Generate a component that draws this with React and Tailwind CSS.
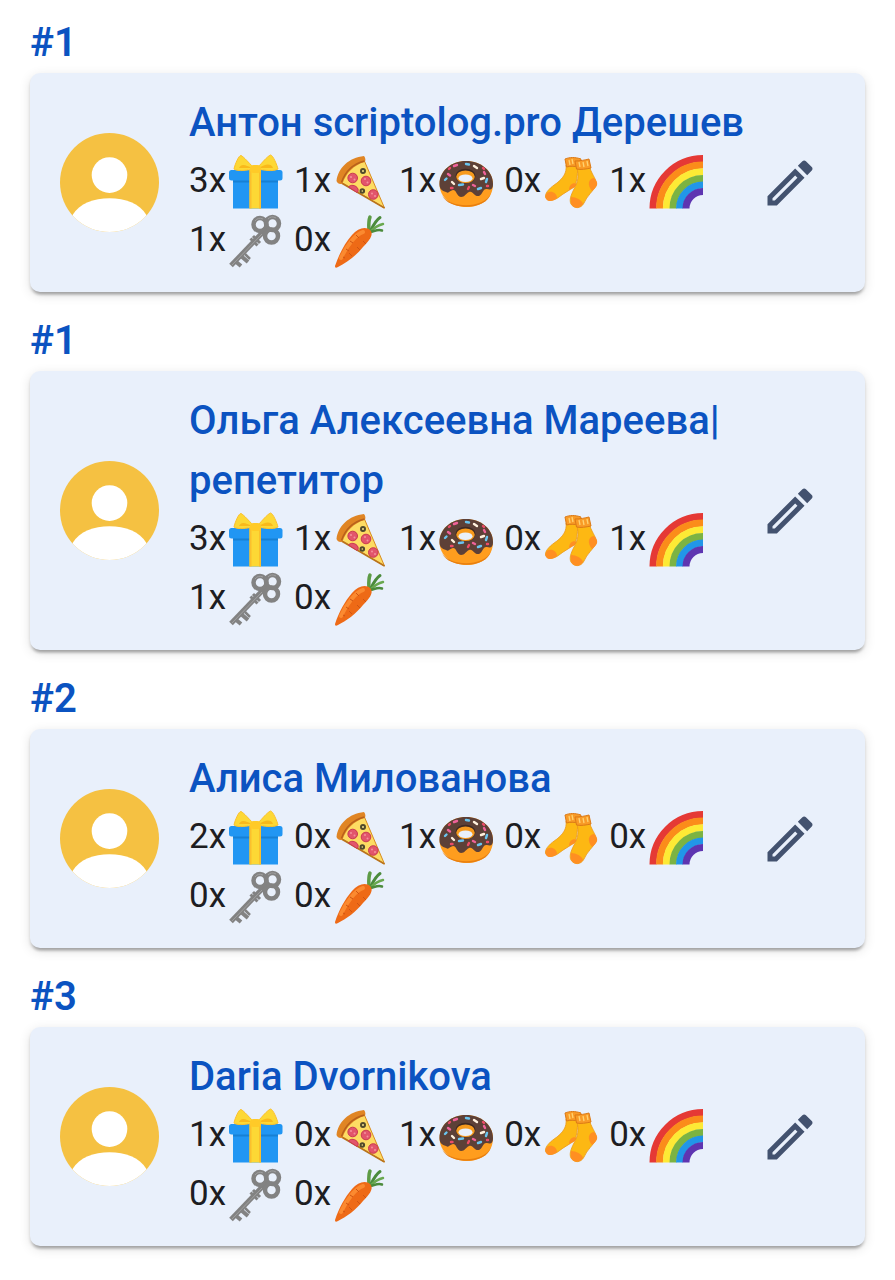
import React from "react";

const players = [
  { place: 1, name: "Антон scriptolog.pro Дерешев", counts: [3, 1, 1, 0, 1, 1, 0] },
  { place: 1, name: "Ольга Алексеевна Мареева|репетитор", counts: [3, 1, 1, 0, 1, 1, 0] },
  { place: 2, name: "Алиса Милованова", counts: [2, 0, 1, 0, 0, 0, 0] },
  { place: 3, name: "Daria Dvornikova", counts: [1, 0, 1, 0, 0, 0, 0] },
];

function Gift() {
  return (
    <>
      <path d="M6 28h45v29.5H6z" fill="#2196f3" />
      <path d="M6 29h45v2.5H6z" fill="#1780d4" />
      <rect x="2" y="19" width="53.5" height="10.5" rx="2.5" fill="#2196f3" />
      <path d="M22.5 19h11.5v38.5H22.5z" fill="#fdd835" />
      <path d="M22.5 19h2v38.5h-2zM32 19h2v38.5h-2z" fill="#fbc02d" />
      <path
        d="M26 16C22 12 17 6 14 4.500C12 4 8 13 7 18C11 21 21 19 26 18zM31 16C35 12 40 5.500 43.500 4C46 4 50 14 51 18C46 21 36 19 31 18z"
        fill="#fdd835"
        stroke="#fbc02d"
      />
      <path d="M25 17C19 14 14 12 12 17zM32 17C38 13 44 12 46 17z" fill="#f9b91b" />
      <rect x="23" y="14" width="11" height="8" rx="3.500" fill="#ffca28" />
    </>
  );
}

function Pizza() {
  return (
    <>
      <path d="M9 31C13 21 21 13 32 9L52.500 57z" fill="#fddc63" stroke="#d98c1f" strokeWidth="1" />
      <path d="M9.500 32L52.500 57" stroke="#b9731c" strokeWidth="1.500" />
      <path
        d="M32 5C33.500 7 34 9.500 32.500 11C22 14 14 22 10.500 32.500C8 33.500 5.500 32.500 4.500 30C6 17 17 6.500 32 5z"
        fill="#e08524"
      />
      <path d="M32.500 10C21 13 13 21 9.500 31.500" fill="none" stroke="#b8611b" strokeWidth="1.500" />
      <g fill="#e2556c" stroke="#c93a50">
        <circle cx="20.700" cy="27" r="4.800" />
        <circle cx="34" cy="30" r="4.800" />
        <circle cx="41.300" cy="43.500" r="4.800" />
        <path d="M16.500 36C18 33.500 24 33.500 26 38C26.500 40 26 41 25 41.500z" />
      </g>
      <g fill="#f3909c">
        <circle cx="19" cy="26" r="1" />
        <circle cx="22.500" cy="28.500" r="1" />
        <circle cx="33" cy="28" r="1" />
        <circle cx="35.500" cy="31.500" r="1" />
        <circle cx="40" cy="42.500" r="1" />
        <circle cx="43" cy="45" r="1" />
      </g>
      <g fill="#f7e28b" stroke="#514a2b" strokeWidth="2">
        <circle cx="31" cy="20" r="2" />
        <circle cx="30.300" cy="40" r="1.800" />
      </g>
    </>
  );
}

function Donut() {
  return (
    <>
      <path
        d="M2.500 33C2.500 20 14 10 29 10S56 20 56 33C56 48 44 56 29.500 56S2.500 47 2.500 33z"
        fill="#ff9d1e"
      />
      <path d="M5 44C11 57 47 59 54 42C50 60 11 60 5 44z" fill="#e87f10" />
      <path
        d="M2.500 33C2.500 20 14 10 29 10S56 20 56 33C56 39 53 39 50 38C46 37 46 43 42 45C37 46 36 39 32 41C28 43 28 46 24 46C19 45 20 39 16 39C12 40 12 43 9 41C5 40 2.500 38 2.500 33z"
        fill="#5d4037"
      />
      <ellipse cx="28.500" cy="25" rx="10" ry="7.300" fill="#3f2a24" />
      <ellipse cx="28.500" cy="25.700" rx="9.300" ry="6.300" fill="#f79a1d" />
      <ellipse cx="28.500" cy="27.300" rx="7" ry="3.800" fill="#e9f0fb" />
      <g strokeWidth="2.400" strokeLinecap="round">
        <path d="M20 14l-3 1M11 23l2 1.500M36 34l2 1M47 21l1 2" stroke="#f0629a" />
        <path d="M29 13l3 .5M8 29l1.500-1.500M22 34l4-.5M41 38l3-1M50 28l-1 3" stroke="#6ac5f0" />
        <path d="M37 15l3 2M44 28l3-1M17 33l-2-2" stroke="#fff0dd" />
        <path d="M46 17l1 1M12 18l1-1M31 38l1-2M14 37l1.500 0M50 35l1 0" stroke="#ed4c67" />
      </g>
    </>
  );
}

function Socks() {
  return (
    <>
      <path
        d="M24 14C25 22 21 27 15 32C9 36 3 41 3.500 46C5 51 12 50 17 46C22 42 28 39 32 36C35 32 35 25 36 16z"
        fill="#fdb813"
        stroke="#eb9818"
        strokeWidth=".8"
      />
      <path d="M5 42C9 39 15 42 15 47C10 51 4 51 3.500 46C3.500 44 4 43 5 42z" fill="#ff8f22" />
      <path d="M35 33C31 31 27 34 27 39L33 36z" fill="#ff8f22" />
      <path d="M23 8C28 6 33 6 39 8L37 16C32 15 28 15 24.500 16z" fill="#f99b27" stroke="#dc7a16" strokeWidth="1" />
      <path
        d="M35 17C37 25 36 31 32 38C29 44 27 49 29 53C32 58 39 58 42 52C45 45 51 40 54 35C56 30 50 24 48 17z"
        fill="#fdb813"
        stroke="#eb9818"
        strokeWidth=".8"
      />
      <path d="M29 46C34 46 40 49 41 53C38 58 30 58 29 52z" fill="#ff8f22" />
      <path d="M52 27C46 28 45 34 50 40C56 35 57 32 52 27z" fill="#ff8f22" />
      <path d="M33 10C38 10 43 9 47 8L49 17C44 18 39 19 34.500 18z" fill="#f99b27" stroke="#dc7a16" strokeWidth="1" />
      <path
        d="M27 9l1 5M30 8l1 5M37 11l1 5M41 11l1 5M45 10l1 5"
        fill="none"
        stroke="#ffd270"
        strokeWidth="1.300"
      />
    </>
  );
}

function Rainbow() {
  return (
    <g fill="none" strokeWidth="7">
      <path d="M6 57.500A50 50 0 0 1 56 7.500" stroke="#e53935" />
      <path d="M12.600 57.500A43.400 43.400 0 0 1 56 14.100" stroke="#fb8c1a" />
      <path d="M19.300 57.500A36.700 36.700 0 0 1 56 20.800" stroke="#fdea35" />
      <path d="M26 57.500A30 30 0 0 1 56 27.500" stroke="#7cb342" />
      <path d="M32.500 57.500A23.500 23.500 0 0 1 56 34" stroke="#2196e8" />
      <path d="M39 57.500A17 17 0 0 1 56 40.500" stroke="#5e35b1" />
    </g>
  );
}

function OldKey() {
  return (
    <g fill="none" stroke="#828282">
      <path d="M38 20L4 55.500" strokeWidth="5" />
      <path d="M26 26l7 7M23.500 28.500l7 7" strokeWidth="3" />
      <path d="M14 46l7 6M8 51l6 5" strokeWidth="4" />
      <path d="M18 44l5 5" strokeWidth="2.500" />
      <circle cx="33" cy="14.500" r="6.500" strokeWidth="4.500" />
      <circle cx="45.500" cy="13.500" r="6.500" strokeWidth="4.500" />
      <circle cx="44.500" cy="26" r="6.500" strokeWidth="4.500" />
      <path d="M35 24L5 55" stroke="#a0a0a0" strokeWidth="1" />
      <path d="M28 11a6.500 6.500 0 0 1 8-2M41 9a6.500 6.500 0 0 1 8-1" stroke="#a0a0a0" strokeWidth="1" />
    </g>
  );
}

function Carrot() {
  return (
    <>
      <g fill="none" strokeLinecap="round">
        <path d="M37 23C37 17 36 12 38 7" stroke="#5d9b45" strokeWidth="3.500" />
        <path d="M38 22C41 16 43 11 48 7.500" stroke="#4b8b3c" strokeWidth="3" />
        <path d="M38 22C42 18 46 15 51 14" stroke="#69a84f" strokeWidth="2.500" />
        <path d="M38 22C43 21 46 19 50 20.500" stroke="#4b8b3c" strokeWidth="2.500" />
      </g>
      <path
        d="M38.500 20.500C34 16 26 18 20 25C13 33 7 44 3 56C3 58 4 58 6 57C14 53 24 46 31 37C37 31 42 25 38.500 20.500z"
        fill="#ee6a16"
      />
      <path d="M31 22C24 24 15 35 9 48" fill="none" stroke="#fb8a30" strokeWidth="4" strokeLinecap="round" />
      <path
        d="M24 25l3 3M18 31l3 2M34 34l-3-3M28 40l-3-3M14 39l3 2M20 46l-3-3M11 47l2 1"
        stroke="#cf5412"
        strokeWidth="1"
      />
    </>
  );
}

const prizes = [
  { label: "Подарок", Art: Gift },
  { label: "Пицца", Art: Pizza },
  { label: "Пончик", Art: Donut },
  { label: "Носки", Art: Socks },
  { label: "Радуга", Art: Rainbow },
  { label: "Ключ", Art: OldKey },
  { label: "Морковь", Art: Carrot },
];

function Avatar() {
  return (
    <svg viewBox="0 0 100 100" className="size-[99px] shrink-0 rounded-full bg-[#f5c142]" aria-hidden="true">
      <circle cx="50" cy="42.500" r="18" fill="#fff" />
      <path d="M12.500 83C20 71 34 66 50 66S80 71 87.500 83L80 100H20z" fill="#fff" />
    </svg>
  );
}

function PlayerCard({ name, counts }) {
  return (
    <div className="flex items-center rounded-[10px] bg-[#e9f0fb] px-[30px] py-5 shadow-[0_5px_3px_-3px_rgba(0,0,0,0.2),0_3px_3px_rgba(0,0,0,0.14),0_3px_12px_rgba(0,0,0,0.12)]">
      <Avatar />
      <div className="ml-[30px] min-w-0 flex-1">
        <h3 className="text-[40px] leading-[60px] font-medium text-[#0b53c1]">{name}</h3>
        <ul className="-mt-0.5 flex flex-wrap gap-x-[7px] pb-[3px] text-[35px] leading-[59px] text-[#1d1d22]">
          {prizes.map(({ label, Art }, i) => (
            <li key={label} className="flex gap-px">
              {counts[i]}x
              <svg viewBox="0 0 60 59" className="h-[59px] w-[60px]" role="img" aria-label={label}>
                <Art />
              </svg>
            </li>
          ))}
        </ul>
      </div>
      <button type="button" aria-label="Изменить" className="shrink-0 py-[15px] pr-[15px] pl-1 text-[#43526f]">
        <svg viewBox="0 0 24 24" fill="currentColor" className="size-[60px]">
          <path d="M14.060 9.020l.92.920L5.920 19H5v-.92l9.060-9.060M17.660 3c-.25 0-.51.1-.7.29l-1.830 1.830 3.750 3.750 1.830-1.830c.39-.39.39-1.020 0-1.410l-2.340-2.340c-.2-.2-.45-.29-.71-.29zm-3.600 3.190L3 17.250V21h3.750L17.810 9.940l-3.750-3.750z" />
        </svg>
      </button>
    </div>
  );
}

export default function App() {
  return (
    <main className="flex min-h-screen flex-col gap-[19px] bg-white px-[30px] pt-[13px] pb-5 font-[Roboto,sans-serif]">
      {players.map((player) => (
        <section key={player.name}>
          <h2 className="text-[40px] leading-[60px] font-semibold text-[#0b53c1]">#{player.place}</h2>
          <PlayerCard name={player.name} counts={player.counts} />
        </section>
      ))}
    </main>
  );
}
